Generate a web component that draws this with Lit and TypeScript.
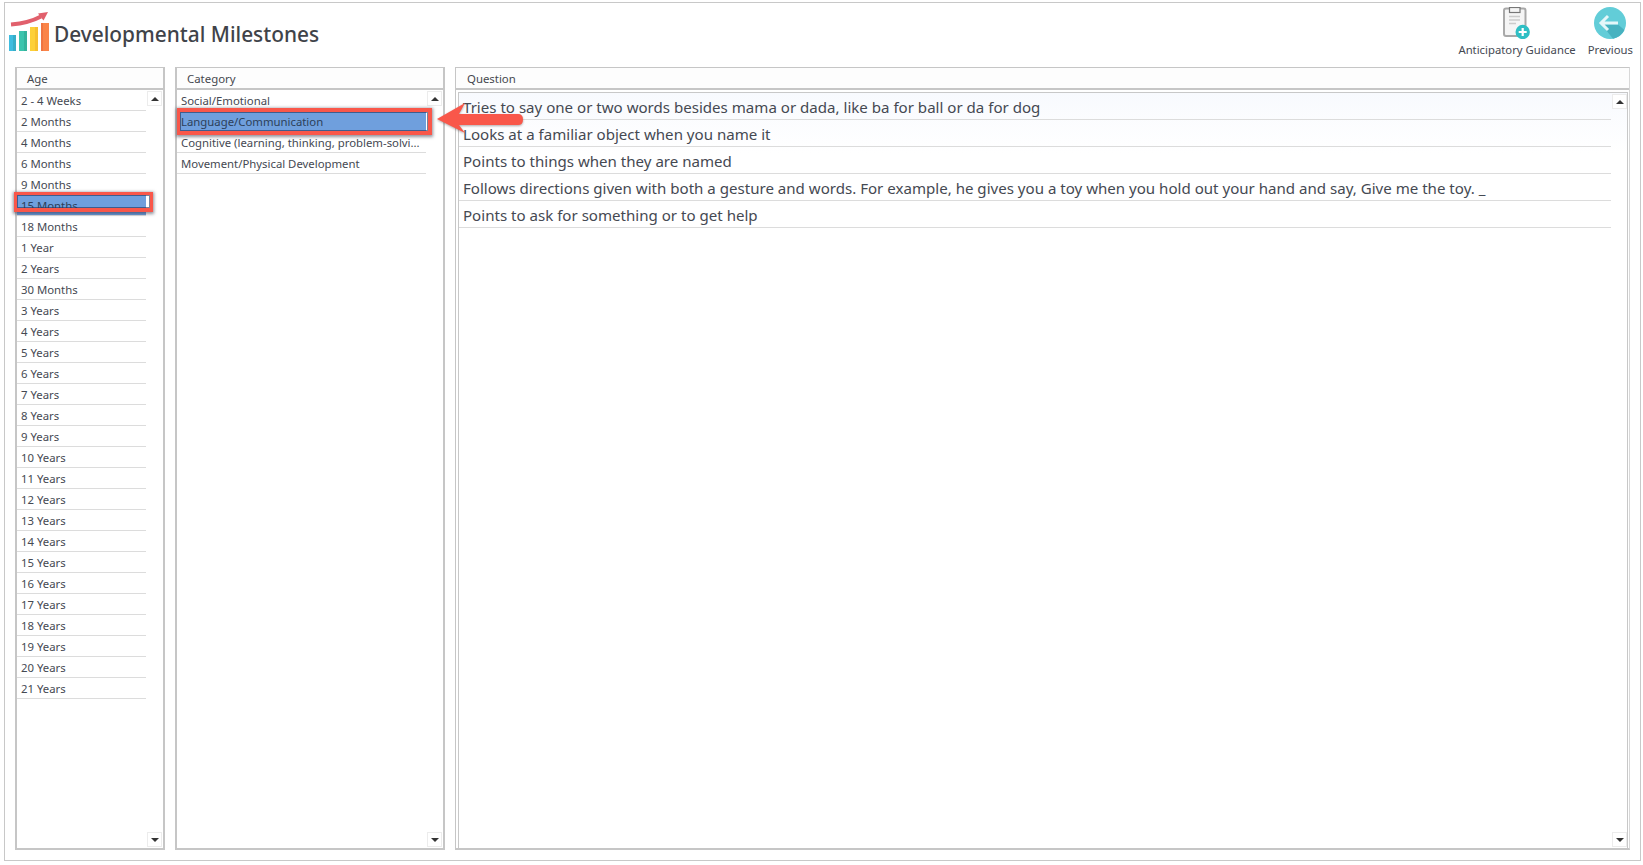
import { LitElement, html, css } from "lit";
import { customElement } from "lit/decorators.js";

const AGES = ["2 - 4 Weeks","2 Months","4 Months","6 Months","9 Months","15 Months","18 Months","1 Year","2 Years","30 Months","3 Years","4 Years","5 Years","6 Years","7 Years","8 Years","9 Years","10 Years","11 Years","12 Years","13 Years","14 Years","15 Years","16 Years","17 Years","18 Years","19 Years","20 Years","21 Years"];
const CATS = ["Social/Emotional","Language/Communication","Cognitive (learning, thinking, problem-solvi...","Movement/Physical Development"];
const QS = ["Tries to say one or two words besides mama or dada, like ba for ball or da for dog","Looks at a familiar object when you name it","Points to things when they are named","Follows directions given with both a gesture and words. For example, he gives you a toy when you hold out your hand and say, Give me the toy. _","Points to ask for something or to get help"];

@customElement("app-root")
export class AppRoot extends LitElement {
  static styles = css`
    :host { display: block; width: 1643px; height: 865px; background: #fff; font-family: "Noto Sans", "Open Sans", sans-serif; color: #454952; overflow: hidden; box-sizing: border-box; padding: 2px 2px 4px 4px; }
    * { box-sizing: border-box; }
    .frame { height: 100%; border: 1px solid #c8c8c8; display: flex; flex-direction: column; }
    .head { height: 64px; flex: none; display: flex; align-items: flex-start; }
    .logo { margin: 9px 0 0 4px; flex: none; display: block; }
    .title { font-size: 20.85px; line-height: 30px; margin: 16px 0 0 4px; font-weight: 500; color: #404349; }
    .spacer { flex: 1; }
    .tool { display: flex; flex-direction: column; align-items: center; font-size: 11.3px; line-height: 16px; margin-top: 4px; }
    .tool svg { display: block; margin-bottom: 3px; }
    .tool.a { margin-right: 12px; }
    .tool.b { margin-right: 7px; }
    .cols { flex: 1; display: flex; gap: 10px; min-height: 0; padding: 0 10px 10px 10px; }
    .panel { display: flex; flex-direction: column; border: 1px solid #c6c6c6; border-width: 1px 2px 2px 2px; min-height: 0; }
    .p1 { width: 150px; } .p2 { width: 270px; }
    .p3 { flex: 1; border-width: 1px 1px 2px 1px; border-right-color: #d8d8d8; }
    .ph { height: 22px; font-size: 11.4px; line-height: 22px; padding-left: 10px; background: #fdfdfd; border-bottom: 2px solid #c6c6c6; flex: none; color: #45484e; }
    .p3 .ph { padding-left: 11px; }
    .body { flex: 1; position: relative; min-height: 0; }
    .row { height: 21.03px; font-size: 11.35px; line-height: 22px; border-bottom: 1px solid #dcdcdc; padding-left: 4px; white-space: nowrap; overflow: hidden; }
    .p1 .row { width: 129px; }
    .p2 .row { width: 249px; }
    .sel { background: #6f9fdd; color: #2d3f5a; }
    .q { border: 1px solid #c8c8c8; border-bottom: 0; margin: 2px 1px 0 2px; height: calc(100% - 2px); background: linear-gradient(#f8fafe, #fff 60px); }
    .q .row { height: 27px; width: 1152px; font-size: 15.08px; line-height: 28px; padding-left: 4px; }
    .sb { position: absolute; right: 1px; width: 15px; height: 15px; border: 1px solid #ececec; background: #fff; display: flex; align-items: center; justify-content: center; }
    .sb.up { top: 1px; } .sb.down { bottom: 1px; }
    .sb.qs { right: 2px; }
    .sb.up.qs { top: 4px; }
    .sb i { display: block; width: 0; height: 0; border-left: 4px solid transparent; border-right: 4px solid transparent; }
    .sb.up i { border-bottom: 4px solid #333; }
    .sb.down i { border-top: 4px solid #333; }
    .mark { position: absolute; border: 3px solid #f9574a; box-shadow: 0 1px 3px 1px rgba(40,40,60,.5), inset 0 0 0 1px rgba(30,50,90,.6); }
    .m1 { left: -3px; top: 102px; width: 139px; height: 20px; border-width: 3px 3px 4px 3px; }
    .m2 { left: 0; top: 18px; width: 255px; height: 27px; border-width: 4px 4px 4px 3px; }
    .arrow { position: absolute; left: 260px; top: 13px; z-index: 3; overflow: visible; filter: drop-shadow(0 1px 1px rgba(60,40,40,.4)); }
  `;

  private list(items: string[], sel: number) {
    return items.map((t, i) => html`<div class="row ${i === sel ? "sel" : ""}">${t}</div>`);
  }

  private scroll(extra = "") {
    return html`<div class="sb up ${extra}"><i></i></div><div class="sb down ${extra}"><i></i></div>`;
  }

  render() {
    return html`<div class="frame">
      <div class="head">
        <svg class="logo" width="41" height="40" viewBox="0 0 41 40">
          <path d="M2 12.5 Q20 11 32 4.5" fill="none" stroke="#e1606c" stroke-width="4"/>
          <path d="M29 1.5 L39 0 L34.5 8.5 Z" fill="#e1606c"/>
          <rect x="0" y="23" width="4" height="16" fill="#3fbde0"/><rect x="4" y="23" width="3" height="16" fill="#37aec8"/>
          <rect x="10" y="19" width="5" height="20" fill="#3cc4ad"/><rect x="15" y="19" width="3" height="20" fill="#35b39c"/>
          <rect x="21" y="15" width="5" height="24" fill="#fdd038"/><rect x="26" y="15" width="3" height="24" fill="#f7c02f"/>
          <rect x="32" y="11" width="2" height="28" fill="#ef7441"/><rect x="34" y="11" width="6" height="28" fill="#fa8448"/>
        </svg>
        <div class="title">Developmental Milestones</div>
        <div class="spacer"></div>
        <div class="tool a">
          <svg width="28" height="32" viewBox="0 0 28 32">
            <rect x="1" y="1.5" width="21.5" height="27.5" rx="2" fill="#f5f5f5" stroke="#a9a9a9" stroke-width="2"/>
            <rect x="6.5" y="0.5" width="10.5" height="5" fill="#f5f5f5" stroke="#777" stroke-width="1.2"/>
            <path d="M6 9.5H17M6 13H17M6 16.5H13" stroke="#cbcbcb" stroke-width="1.3"/>
            <circle cx="19.7" cy="25" r="7.2" fill="#2fbfc4"/>
            <path d="M19.7 21V29M15.7 25H23.7" stroke="#fff" stroke-width="2.2"/>
          </svg>
          <span>Anticipatory Guidance</span>
        </div>
        <div class="tool b">
          <svg width="32" height="32" viewBox="0 0 32 32">
            <circle cx="16" cy="16" r="16" fill="#62cdd8"/>
            <path d="M14 17.5 L24 17.5 L30.5 23 A16 16 0 0 1 19 31.7 L8 18Z" fill="#47b2c0"/>
            <path d="M14 9 L7 16 L14 23 M7 16 H24" fill="none" stroke="#e4f7f9" stroke-width="3"/>
          </svg>
          <span>Previous</span>
        </div>
      </div>
      <div class="cols">
        <div class="panel p1">
          <div class="ph">Age</div>
          <div class="body">${this.list(AGES, 5)}${this.scroll()}<div class="mark m1"></div></div>
        </div>
        <div class="panel p2">
          <div class="ph">Category</div>
          <div class="body">${this.list(CATS, 1)}${this.scroll()}<div class="mark m2"></div>
            <svg class="arrow" width="86" height="30" viewBox="0 0 86 30">
              <path d="M0 16 L28 0 L22 11 L81 11 Q86 11 86 16.5 Q86 22 81 22 L22 22 L28 30 Z" fill="#f9574a"/>
            </svg>
          </div>
        </div>
        <div class="panel p3">
          <div class="ph">Question</div>
          <div class="body"><div class="q">${this.list(QS, -1)}</div>${this.scroll("qs")}</div>
        </div>
      </div>
    </div>`;
  }
}
